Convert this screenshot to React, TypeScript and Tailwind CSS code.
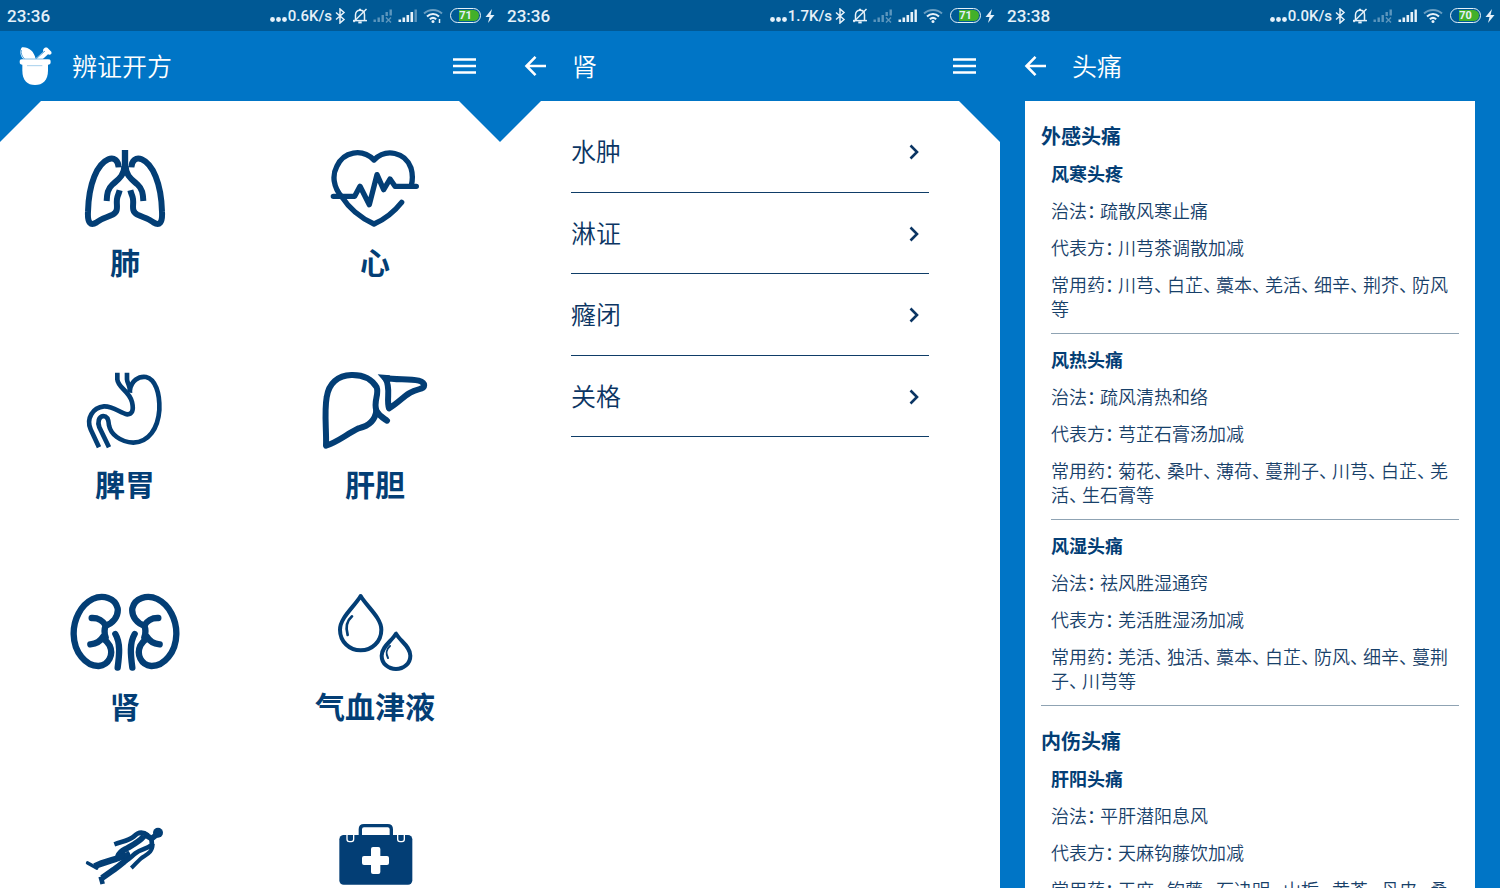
import React from "react";

type StatusProps = { time: string; speed: string; battery: number; weak?: boolean };

function StatusBar({ time, speed, battery, weak = false }: StatusProps) {
  return (
    <div className="flex h-[31px] shrink-0 items-center justify-between bg-[#005995] pr-[5px] pl-[7px] font-['Roboto',sans-serif] text-[#e6f1f9]">
      <span className="text-[17px] leading-5 font-medium">{time}</span>
      <div className="flex items-center">
        <svg className="h-5 w-[18px]" viewBox="0 0 18 20" fill="currentColor" aria-hidden="true">
          <circle cx="2.5" cy="13.500" r="2.400" />
          <circle cx="8.500" cy="13.500" r="2.400" />
          <circle cx="14.500" cy="13.500" r="2.400" />
        </svg>
        <span className="text-[15px] leading-5 font-medium">{speed}</span>
        <svg className="ml-[2px] h-4 w-3" viewBox="0 0 12 16" fill="none" stroke="currentColor" strokeWidth="1.5" aria-hidden="true">
          <path d="M2 4.5 L10 11.5 L6 15 V1 L10 4.5 L2 11.5" />
        </svg>
        <svg className="ml-[6px] h-4 w-4" viewBox="0 0 16 16" fill="none" stroke="currentColor" strokeWidth="1.5" aria-hidden="true">
          <path d="M3.5 12 V7 C3.5 4 5.3 2.3 8 2.3 S12.5 4 12.5 7 V12" />
          <path d="M1 12.6 H15" />
          <path d="M14.5 1 L1.5 14" />
          <path d="M6.3 14.4 H9.7" strokeWidth="2" />
          <path d="M8 .8 V2.5" strokeWidth="2" />
        </svg>
        <svg className="ml-[5px] h-4 w-5" viewBox="0 0 20 16" fill="currentColor" opacity="0.4" aria-hidden="true">
          <path d="M.5 11.5h2.4V14H.5zM4.5 9.5h2.4V14H4.5zM8.5 7h2.4v7H8.5zM12.5 4h2.4v4h-2.4zM16.500 1.500h2.400v6h-2.400z" />
          <path d="M13 9.500 L18 14.500 M18 9.500 L13 14.500" stroke="currentColor" strokeWidth="1.4" />
        </svg>
        <svg className="ml-[5px] h-4 w-5" viewBox="0 0 20 16" fill="currentColor" aria-hidden="true">
          <path d="M.5 11.5h2.6V14H.5zM4.5 9.5h2.6V14H4.5zM8.5 7h2.6v7H8.5zM12.5 4h2.6v10h-2.6z" />
          <path d="M16.5 1.500h2.400v12.500h-2.400z" opacity={weak ? 0.4 : 1} />
        </svg>
        <svg className="ml-[5px] h-4 w-5" viewBox="0 0 20 16" fill="none" stroke="currentColor" strokeWidth="2" aria-hidden="true">
          <path d="M1 5.500 C6 .8 14 .8 19 5.500" opacity="0.45" />
          <path d="M4 8.400 C7.500 5.200 12.500 5.200 16 8.400" />
          <path d="M6.800 11.200 C8.700 9.600 11.300 9.600 13.200 11.200" />
          <circle cx="10" cy="13.600" r="1.500" fill="currentColor" stroke="none" />
          {weak && <path d="M16.500 11 V15" strokeWidth="1.500" />}
        </svg>
        <span className="ml-[7px] flex h-[15px] w-[31px] rounded-full border border-[#e6f1f9] p-px">
          <span className="flex flex-1 items-center justify-center rounded-full bg-linear-to-r from-[#005995] from-27% to-[#43b02a] to-27% text-[11px] leading-none font-bold">
            {battery}
          </span>
        </span>
        <svg className="ml-[4px] h-[14px] w-[10px]" viewBox="0 0 10 14" fill="currentColor" aria-hidden="true">
          <path d="M7 0 L.5 8 H4.500 L3 14 L9.500 6 H5.500 Z" />
        </svg>
      </div>
    </div>
  );
}

function MortarIcon() {
  return (
    <svg className="h-10 w-9" viewBox="51 138 108 120" fill="#fff" aria-hidden="true">
      <path d="M66 142 C84 140 102 152 107 177 H70 C60 168 58 152 66 142Z" />
      <path d="M64 150 C62 160 66 169 73 176" fill="none" stroke="#0075c6" strokeWidth="2" />
      <path d="M104 178 L130 155 C127 147 136 140 143 144 L154 155 C157 162 150 166 144 163 L128 178Z" />
      <path d="M109 176 L135 153" fill="none" stroke="#0075c6" strokeWidth="2" />
      <rect x="59" y="177" width="93" height="17" rx="8" />
      <path d="M67 191 H144 V212 C144 240 128 255 105 255 C82 255 67 240 67 212Z" />
      <path d="M81 197 H127" stroke="#79b7e2" strokeWidth="2" />
      <path d="M64 177 H148" stroke="#0075c6" strokeWidth="1.500" />
    </svg>
  );
}

function Header({ title, home = false, menu = false }: { title: string; home?: boolean; menu?: boolean }) {
  return (
    <header className="flex h-[70px] shrink-0 items-center pr-6 pl-[17px] text-white">
      {home ? (
        <MortarIcon />
      ) : (
        <button type="button" aria-label="返回" className="flex size-9 items-center justify-center">
          <svg className="h-5 w-[22px]" viewBox="0 0 22 20" fill="none" stroke="currentColor" strokeWidth="2.600" aria-hidden="true">
            <path d="M11.500 .9 L2.500 10 L11.500 19.100 M2.500 10 H22" />
          </svg>
        </button>
      )}
      <h1 className="ml-[19px] flex-1 pb-[2px] text-[25px] leading-8 font-[350]">{title}</h1>
      {menu && (
        <button type="button" aria-label="菜单" className="flex h-9 items-center">
          <svg className="h-4 w-[23px]" viewBox="0 0 23 16" fill="none" stroke="currentColor" strokeWidth="2.400" aria-hidden="true">
            <path d="M0 1.500 H23 M0 8 H23 M0 14.500 H23" />
          </svg>
        </button>
      )}
    </header>
  );
}

type IconProps = { viewBox: string; children: React.ReactNode; width?: number };

function Drawing({ viewBox, children, width = 14 }: IconProps) {
  return (
    <svg
      className="h-20 w-[130px]"
      viewBox={viewBox}
      fill="none"
      stroke="currentColor"
      strokeWidth={width}
      strokeLinejoin="round"
      aria-hidden="true"
    >
      {children}
    </svg>
  );
}

function LungHalf() {
  return (
    <>
      <path d="M193 78 C193 108 172 120 157 134 C143 147 141 160 140 183" />
      <path d="M176 82 C175 62 162 50 145 58 C112 72 86 130 84 215 C82 250 92 258 110 247 C125 234 140 233 158 224 C180 212 166 192 172 172 C174 165 177 159 179 151" />
    </>
  );
}

function KidneyHalf() {
  return (
    <g strokeLinecap="round">
      <path d="M136 122 C158 116 176 95 173 70 C166 38 128 28 98 42 C62 60 40 104 41 148 C42 202 78 244 116 243 C148 240 161 208 149 182 C144 172 137 166 130 160" />
      <path d="M95 99 C114 98 130 108 137 122 C132 134 133 146 137 157 M91 178 C108 176 122 168 130 154" />
      <path d="M166 147 C182 174 178 210 173 248" />
    </g>
  );
}

const organs: { id: string; name?: string; icon: React.ReactNode }[] = [
  {
    id: "lung",
    name: "肺",
    icon: (
      <Drawing viewBox="0 27 390 240" width={18}>
        <path d="M195 30 V95" strokeWidth="19" />
        <LungHalf />
        <g transform="matrix(-1 0 0 1 390 0)">
          <LungHalf />
        </g>
      </Drawing>
    ),
  },
  {
    id: "heart",
    name: "心",
    icon: (
      <Drawing viewBox="0 27 390 240" width={16}>
        <g strokeLinecap="round">
          <path d="M95 170 C70 142 66 106 80 80 C100 34 156 24 192 60 C228 24 286 36 303 84 C309 104 308 120 304 136" />
          <path d="M95 170 C118 206 152 234 192 252 C224 238 252 216 275 187" />
          <path d="M70 169 H134 L150 139 L178 194 L201 104 L221 149 L240 117 L255 139 H319" />
        </g>
      </Drawing>
    ),
  },
  {
    id: "stomach",
    name: "脾胃",
    icon: (
      <Drawing viewBox="0 33 390 240" width={14}>
        <path d="M172 38 V58 C174 84 208 92 216 126 C222 152 216 162 202 163 C180 160 162 138 132 139 C98 142 78 176 92 208 L117 262" />
        <path d="M201 38 V58 C202 72 212 76 210 98" />
        <path d="M209 92 C214 62 236 48 258 51 C286 58 300 98 298 150 C294 206 266 246 220 248 C180 246 152 222 147 196 C146 178 140 168 130 168 C116 170 112 186 118 202 L147 262" />
      </Drawing>
    ),
  },
  {
    id: "liver",
    name: "肝胆",
    icon: (
      <Drawing viewBox="0 33 390 240" width={18}>
        <path d="M48 257 C50 214 42 158 50 112 C56 70 84 46 124 45 C160 44 186 58 200 82 C208 104 190 122 199 152 C196 180 176 198 146 205 C110 222 84 246 48 257Z" />
        <path d="M199 152 C208 168 216 172 231 182" strokeLinecap="round" />
        <path d="M226 54 C256 60 296 56 326 62 C348 68 348 84 326 88 C288 96 276 122 237 145 C228 116 244 86 226 54Z" />
        <path d="M203 43 L240 46 L228 72 Z" fill="currentColor" stroke="none" />
      </Drawing>
    ),
  },
  {
    id: "kidney",
    name: "肾",
    icon: (
      <Drawing viewBox="0 24 390 240" width={19}>
        <KidneyHalf />
        <g transform="matrix(-1 0 0 1 390 0)">
          <KidneyHalf />
        </g>
      </Drawing>
    ),
  },
  {
    id: "fluids",
    name: "气血津液",
    icon: (
      <Drawing viewBox="0 24 390 240" width={12}>
        <path d="M152 33 C134 64 90 98 90 134 C90 170 118 196 152 196 C186 196 214 170 214 134 C214 98 170 64 152 33Z" />
        <path d="M258 146 C246 168 215 184 215 212 C215 236 235 252 258 252 C281 252 301 236 301 212 C301 184 270 168 258 146Z" />
        <path d="M126 94 C110 108 107 130 113 150" strokeWidth="8" strokeLinecap="round" />
        <path d="M240 183 C228 193 228 208 234 219" strokeWidth="6" strokeLinecap="round" />
      </Drawing>
    ),
  },
  {
    id: "body",
    icon: (
      <Drawing viewBox="-30 15 390 240">
        <circle cx="264" cy="68" r="15" fill="currentColor" stroke="none" />
        <path d="M222 72 L245 86 L262 72" strokeWidth="17" />
        <path d="M234 76 C216 62 202 68 191 80 C176 92 158 94 133 103" strokeWidth="14" />
        <path d="M222 78 C208 96 186 106 167 117 C155 123 147 130 144 140" strokeWidth="18" />
        <path d="M170 130 C160 146 112 150 74 169" strokeWidth="19" />
        <path d="M80 174 L53 159" strokeWidth="11" strokeLinecap="round" />
        <path d="M168 128 C184 144 152 164 130 180 L96 204" strokeWidth="18" />
        <path d="M92 200 L98 222" strokeWidth="14" />
        <path d="M244 84 L246 104 C230 118 211 118 196 130 C186 138 176 148 166 154" strokeWidth="14" />
        <path d="M248 102 C248 130 226 134 212 146 C202 155 195 164 184 174" strokeWidth="12" />
      </Drawing>
    ),
  },
  {
    id: "kit",
    icon: (
      <Drawing viewBox="720 15 390 240" width={10}>
        <rect x="808" y="75" width="219" height="149" rx="13" fill="currentColor" stroke="none" />
        <path d="M871 78 V58 Q871 47 882 47 H953 Q964 47 964 58 V78" />
        <g stroke="#fff" strokeWidth="4">
          <path d="M831 74 V88 Q831 95 838 95 H844 Q851 95 851 88 V74" />
          <path d="M983 74 V88 Q983 95 990 95 H996 Q1003 95 1003 88 V74" />
        </g>
        <g fill="#fff" stroke="none">
          <rect x="903" y="111" width="28" height="81" rx="6" />
          <rect x="876" y="138" width="81" height="27" rx="6" />
        </g>
      </Drawing>
    ),
  },
];

const kidneyTopics = ["水肿", "淋证", "癃闭", "关格"];

type Syndrome = { name: string; method: string; formula: string; herbs: string };

const headache: { title: string; items: Syndrome[] }[] = [
  {
    title: "外感头痛",
    items: [
      { name: "风寒头疼", method: "疏散风寒止痛", formula: "川芎茶调散加减", herbs: "川芎、白芷、藁本、羌活、细辛、荆芥、防风等" },
      { name: "风热头痛", method: "疏风清热和络", formula: "芎芷石膏汤加减", herbs: "菊花、桑叶、薄荷、蔓荆子、川芎、白芷、羌活、生石膏等" },
      { name: "风湿头痛", method: "祛风胜湿通窍", formula: "羌活胜湿汤加减", herbs: "羌活、独活、藁本、白芷、防风、细辛、蔓荆子、川芎等" },
    ],
  },
  {
    title: "内伤头痛",
    items: [
      { name: "肝阳头痛", method: "平肝潜阳息风", formula: "天麻钩藤饮加减", herbs: "天麻、钩藤、石决明、山栀、黄芩、丹皮、桑" },
    ],
  },
];

function Line({ text }: { text: string }) {
  return (
    <p>
      {text.split(/([：、])/).map((part, i) =>
        part === "：" || part === "、" ? (
          <span key={i} className="mr-1 font-normal [font-feature-settings:'halt']">
            {part}
          </span>
        ) : (
          part
        ),
      )}
    </p>
  );
}

const notched =
  "[clip-path:polygon(0_41px,41px_0,calc(100%-41px)_0,100%_41px,100%_100%,0_100%)]";

export default function App() {
  return (
    <div
      lang="zh-CN"
      className="grid h-screen grid-cols-3 overflow-hidden bg-[#0075c6] font-['Noto_Sans_CJK_SC',sans-serif] text-[#033e75]"
    >
      <section className="flex min-h-0 flex-col">
        <StatusBar time="23:36" speed="0.6K/s" battery={71} weak />
        <Header title="辨证开方" home menu />
        <main className={`min-h-0 flex-1 overflow-hidden bg-white ${notched}`}>
          <div className="grid grid-cols-2">
            {organs.map((organ) => (
              <button key={organ.id} type="button" className="flex h-[222px] flex-col items-center gap-[14px] pt-12">
                {organ.icon}
                {organ.name && <span className="text-[30px] leading-9 font-bold">{organ.name}</span>}
              </button>
            ))}
          </div>
        </main>
      </section>

      <section className="flex min-h-0 flex-col">
        <StatusBar time="23:36" speed="1.7K/s" battery={71} />
        <Header title="肾" menu />
        <main className={`min-h-0 flex-1 overflow-hidden bg-white px-[71px] pt-[10px] ${notched}`}>
          <nav className="grid h-[326px] auto-rows-fr">
            {kidneyTopics.map((topic) => (
              <a key={topic} href={`#${topic}`} className="flex items-center justify-between border-b border-[#0f3d68] pt-[2px] pr-[10px] text-[25px] leading-8 font-[350] text-[#0b3563]">
                <span className="pb-1">{topic}</span>
                <svg className="h-4 w-[10px]" viewBox="0 0 10 16" fill="none" stroke="currentColor" strokeWidth="2.600" aria-hidden="true">
                  <path d="M1.500 1.500 L8 8 L1.500 14.500" />
                </svg>
              </a>
            ))}
          </nav>
        </main>
      </section>

      <section className="flex min-h-0 flex-col">
        <StatusBar time="23:38" speed="0.0K/s" battery={70} />
        <Header title="头痛" />
        <main className="mx-[25px] min-h-0 flex-1 overflow-hidden bg-white px-4">
          {headache.map((group) => (
            <section key={group.title} className="border-b border-[#8fa3b3] pt-[21px] pb-[13px]">
              <h2 className="mb-3 text-xl leading-7 font-bold">{group.title}</h2>
              <div className="ml-[10px] flex flex-col gap-[14px]">
                {group.items.map((item) => (
                  <article
                    key={item.name}
                    className="flex flex-col gap-[13px] border-b border-[#8fa3b3] pb-[13px] text-[18px] leading-6 font-[350] text-[#174069] last:border-b-0 last:pb-0"
                  >
                    <h3 className="leading-[23px] font-bold text-[#033e75]">{item.name}</h3>
                    <Line text={`治法：${item.method}`} />
                    <Line text={`代表方：${item.formula}`} />
                    <Line text={`常用药：${item.herbs}`} />
                  </article>
                ))}
              </div>
            </section>
          ))}
        </main>
      </section>
    </div>
  );
}
